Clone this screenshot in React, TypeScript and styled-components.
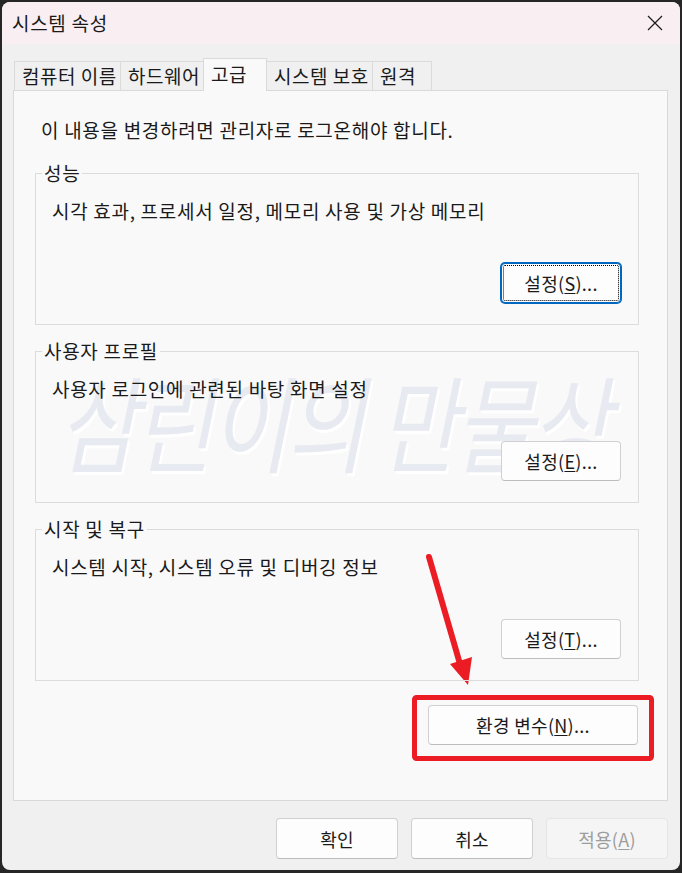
import React from "react";
import styled, { createGlobalStyle } from "styled-components";

const GlobalStyle = createGlobalStyle`
  html, body {
    margin: 0;
    padding: 0;
    background: #262626;
  }
  body {
    font-family: "Noto Sans CJK KR", "Noto Sans", sans-serif;
    color: #1a1a1a;
  }
`;

const Page = styled.div`
  position: relative;
  width: 682px;
  height: 873px;
  overflow: hidden;
`;

const Window = styled.div`
  margin: 2px;
  width: 678px;
  height: 868px;
  border-radius: 8px;
  background: #f0f0f0;
  overflow: hidden;
  display: flex;
  flex-direction: column;
`;

const TitleBar = styled.div`
  height: 42px;
  flex: none;
  background: #f9eef2;
  display: flex;
  align-items: center;
  justify-content: space-between;
  padding: 0 17px 0 10px;
`;

const Title = styled.span`
  font-size: 19px;
  letter-spacing: 0.7px;
  line-height: 22px;
`;

const Body = styled.div`
  flex: 1;
  display: flex;
  flex-direction: column;
  padding: 14px 12px 11px 11px;
`;

const TabStrip = styled.div`
  height: 32px;
  display: flex;
  align-items: flex-end;
  padding-left: 1px;
  position: relative;
  z-index: 2;
`;

const Tab = styled.div<{ $w: number; $active?: boolean }>`
  box-sizing: border-box;
  width: ${(p) => p.$w}px;
  height: ${(p) => (p.$active ? 33 : 29)}px;
  margin-bottom: ${(p) => (p.$active ? -1 : 0)}px;
  margin-left: -1px;
  padding: 0 7px;
  border: 1px solid #dadada;
  border-bottom: none;
  background: ${(p) => (p.$active ? "#f9f9f9" : "#f0f0f0")};
  font-size: 19px;
  letter-spacing: 0.5px;
  line-height: ${(p) => (p.$active ? 30 : 28)}px;
  white-space: nowrap;
  &:first-child {
    margin-left: 0;
  }
`;

const Panel = styled.div`
  box-sizing: border-box;
  height: 711px;
  flex: none;
  position: relative;
  border: 1px solid #d9d9d9;
  background: #f9f9f9;
  padding: 28px 28px 0 21px;
  display: flex;
  flex-direction: column;
  gap: 15px;
`;

// 배경 워터마크
const Watermark = styled.div`
  position: absolute;
  left: 44px;
  top: 286px;
  font-size: 86px;
  line-height: 1;
  font-style: italic;
  font-weight: 400;
  letter-spacing: -3px;
  color: #e7eaf1;
  text-shadow: 2px 2px 0 #ffffff;
  white-space: nowrap;
  transform: scaleY(1.22);
  transform-origin: left center;
  pointer-events: none;
  z-index: 0;
`;

const Notice = styled.div`
  position: relative;
  z-index: 1;
  font-size: 19px;
  letter-spacing: 0.7px;
  line-height: 22px;
  padding-left: 6px;
  margin-bottom: 6px;
`;

const Group = styled.fieldset`
  position: relative;
  z-index: 1;
  margin: 0;
  min-width: 0;
  padding: 16px 17px 21px 16px;
  border: 1px solid #dcdcdc;
  display: flex;
  flex-direction: column;
`;

const Legend = styled.legend`
  margin-left: -10px;
  padding: 0 2px;
  font-size: 19px;
  letter-spacing: 0.7px;
  line-height: 22px;
`;

const Desc = styled.div`
  font-size: 19px;
  letter-spacing: 0.7px;
  line-height: 22px;
  margin-bottom: 41px;
`;

const ButtonRow = styled.div<{ $gap?: number }>`
  display: flex;
  justify-content: flex-end;
  gap: ${(p) => p.$gap ?? 0}px;
`;

const Button = styled.button<{ $w: number; $h?: number; $focused?: boolean }>`
  box-sizing: border-box;
  width: ${(p) => p.$w}px;
  height: ${(p) => p.$h ?? 40}px;
  font-family: inherit;
  font-size: 18px;
  letter-spacing: 0.3px;
  color: #1a1a1a;
  background: #fdfdfd;
  border: 1px solid ${(p) => (p.$focused ? "#0067c0" : "#d0d0d0")};
  border-bottom-color: ${(p) => (p.$focused ? "#0067c0" : "#bdbdbd")};
  box-shadow: ${(p) => (p.$focused ? "0 0 0 1px #0067c0" : "none")};
  outline: ${(p) => (p.$focused ? "1px dotted #000" : "none")};
  outline-offset: -3px;
  border-radius: 4px;
  padding: 0;
  &:disabled {
    background: #f5f5f5;
    border-color: #e5e5e5;
    color: #9d9d9d;
  }
`;

const EnvRow = styled(ButtonRow)`
  margin-top: 9px;
  padding-right: 1px;
`;

const Footer = styled(ButtonRow)`
  margin-top: 17px;
`;

const Key = styled.u`
  text-underline-offset: 2px;
`;

const Overlay = styled.svg`
  position: absolute;
  left: 0;
  top: 0;
  pointer-events: none;
`;

const CloseIcon = () => (
  <svg width="16" height="16" viewBox="0 0 16 16">
    <path d="M1 1 L15 15 M15 1 L1 15" stroke="#1a1a1a" strokeWidth="1.2" />
  </svg>
);

const groups = [
  { title: "성능", desc: "시각 효과, 프로세서 일정, 메모리 사용 및 가상 메모리", key: "S", focused: true },
  { title: "사용자 프로필", desc: "사용자 로그인에 관련된 바탕 화면 설정", key: "E" },
  { title: "시작 및 복구", desc: "시스템 시작, 시스템 오류 및 디버깅 정보", key: "T" },
];

const tabs = [
  { name: "컴퓨터 이름", w: 107 },
  { name: "하드웨어", w: 84 },
  { name: "고급", w: 64, active: true },
  { name: "시스템 보호", w: 107 },
  { name: "원격", w: 60 },
];

export default function App() {
  return (
    <Page>
      <GlobalStyle />
      <Window>
        <TitleBar>
          <Title>시스템 속성</Title>
          <CloseIcon />
        </TitleBar>
        <Body>
          <TabStrip>
            {tabs.map((t) => (
              <Tab key={t.name} $w={t.w} $active={t.active}>
                {t.name}
              </Tab>
            ))}
          </TabStrip>
          <Panel>
            <Watermark>삼린이의 만물상</Watermark>
            <Notice>이 내용을 변경하려면 관리자로 로그온해야 합니다.</Notice>
            {groups.map((g) => (
              <Group key={g.title}>
                <Legend>{g.title}</Legend>
                <Desc>{g.desc}</Desc>
                <ButtonRow>
                  <Button $w={120} $focused={g.focused}>
                    설정(<Key>{g.key}</Key>)...
                  </Button>
                </ButtonRow>
              </Group>
            ))}
            <EnvRow>
              <Button $w={210}>
                환경 변수(<Key>N</Key>)...
              </Button>
            </EnvRow>
          </Panel>
          <Footer $gap={13}>
            <Button $w={122} $h={41}>확인</Button>
            <Button $w={122} $h={41}>취소</Button>
            <Button $w={122} $h={41} disabled>
              적용(<Key>A</Key>)
            </Button>
          </Footer>
        </Body>
      </Window>
      <Overlay width="682" height="873" viewBox="0 0 682 873">
        <rect x="414.5" y="697.5" width="237" height="61" rx="2" fill="none" stroke="#ec1c24" strokeWidth="5" />
        <line x1="429" y1="557" x2="460" y2="664" stroke="#ec1c24" strokeWidth="6" strokeLinecap="round" />
        <polygon points="450,664 472,657 468,685" fill="#ec1c24" />
      </Overlay>
    </Page>
  );
}
